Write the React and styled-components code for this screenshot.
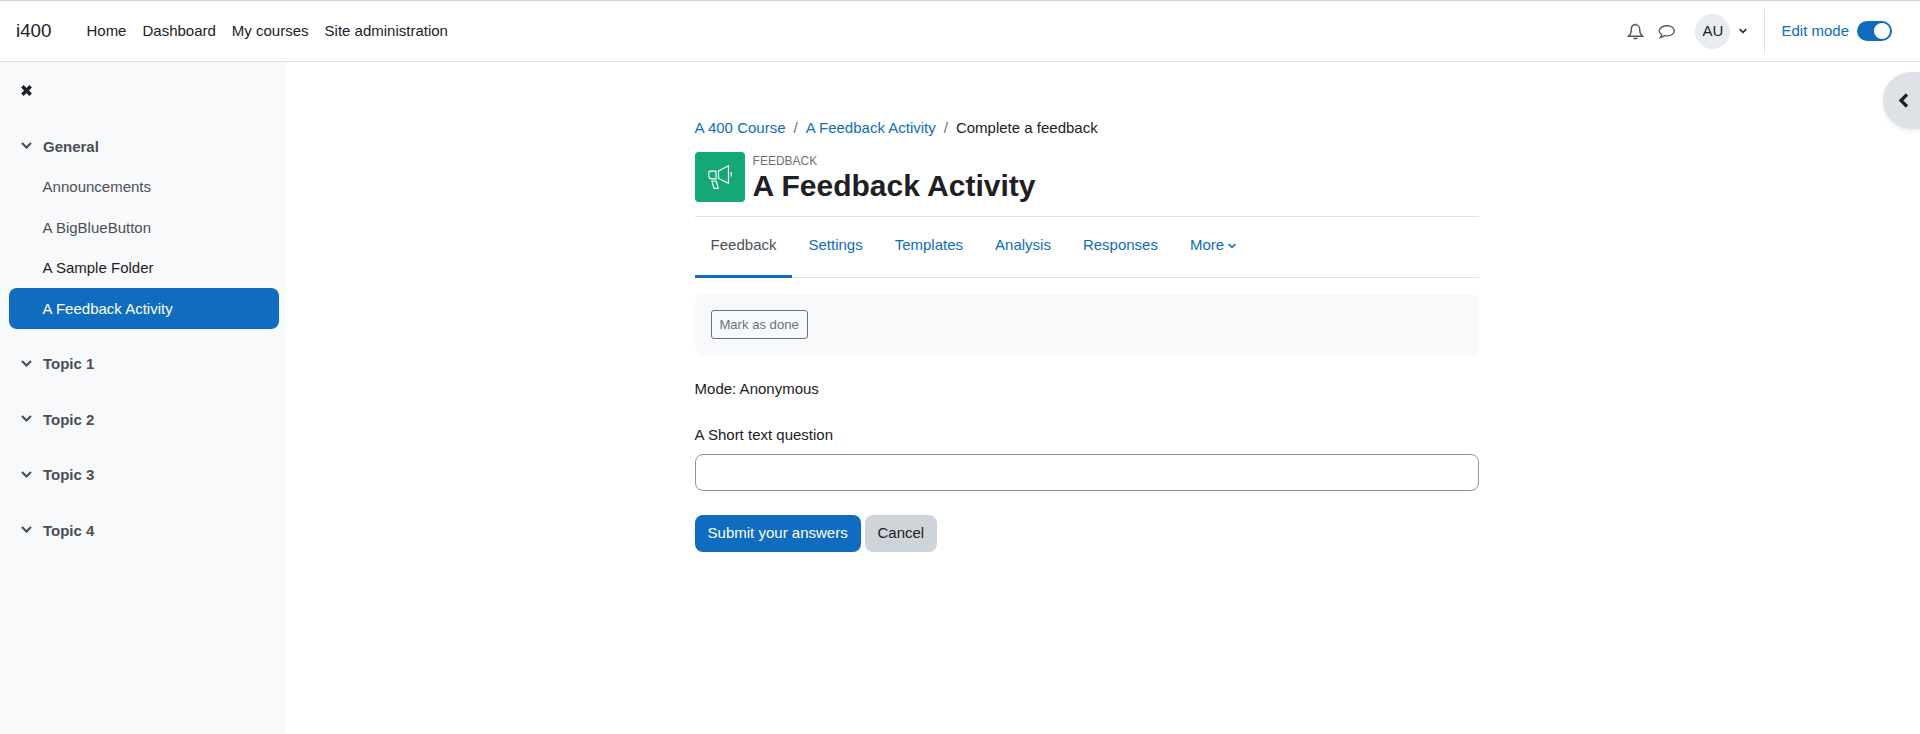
import React from "react";
import styled, { createGlobalStyle } from "styled-components";

const sections = [
  {
    title: "General",
    items: [
      { label: "Announcements" },
      { label: "A BigBlueButton" },
      { label: "A Sample Folder", dark: true },
      { label: "A Feedback Activity", active: true },
    ],
  },
  { title: "Topic 1", items: [] },
  { title: "Topic 2", items: [] },
  { title: "Topic 3", items: [] },
  { title: "Topic 4", items: [] },
];

const tabs = ["Feedback", "Settings", "Templates", "Analysis", "Responses"];

function Chevron({ className }) {
  return (
    <svg className={className} viewBox="0 0 11 7" fill="none" stroke="currentColor" strokeWidth="2.200">
      <polyline points="1,1 5.500,5.500 10,1" />
    </svg>
  );
}

export default function App() {
  return (
    <Page>
      <GlobalStyle />
      <Navbar>
        <Brand>i400</Brand>
        <PrimaryNav>
          <NavLink>Home</NavLink>
          <NavLink>Dashboard</NavLink>
          <NavLink>My courses</NavLink>
          <NavLink>Site administration</NavLink>
        </PrimaryNav>
        <UserArea>
          <NavIcon width="17" height="17" viewBox="0 0 17 17">
            <path d="M8.500 1.800c-2.800 0-4.200 2-4.200 4.600 0 3.400-.9 5.200-2.800 6.800h14c-1.900-1.600-2.800-3.400-2.800-6.800 0-2.600-1.400-4.600-4.200-4.600z" />
            <path d="M8.500 .6v1.200" />
            <path d="M6.600 14.800c.4 1.200 3.400 1.200 3.800 0" />
          </NavIcon>
          <MessageIcon width="18" height="17" viewBox="0 0 18 17">
            <path d="M9.500 2.800C5.300 2.800 1.200 4.700 1.200 7.900c0 1.600 1 2.800 2.500 3.600-.2 1.200-.6 2.200-1.400 3 1.700-.1 3.100-.9 4.100-1.900.9.200 1.700.3 2.600.3 4 0 7.300-2 7.300-5S13.500 2.800 9.500 2.800z" />
          </MessageIcon>
          <Avatar>AU</Avatar>
          <Caret />
          <Separator />
          <EditLabel>Edit mode</EditLabel>
          <Switch>
            <Knob />
          </Switch>
        </UserArea>
      </Navbar>
      <Body>
        <Sidebar>
          <CloseIcon viewBox="0 0 11 11">
            <path d="M2 2l7 7M9 2l-7 7" />
          </CloseIcon>
          <CourseIndex>
            {sections.map((section) => (
              <Section key={section.title}>
                <SectionTitle>
                  <SectionChevron />
                  {section.title}
                </SectionTitle>
                {section.items.map((item) => (
                  <SectionItem key={item.label} $active={item.active} $dark={item.dark}>
                    {item.label}
                  </SectionItem>
                ))}
              </Section>
            ))}
          </CourseIndex>
        </Sidebar>
        <Main>
          <Breadcrumb>
            <Crumb>A 400 Course</Crumb>
            <CrumbDivider>/</CrumbDivider>
            <Crumb>A Feedback Activity</Crumb>
            <CrumbDivider>/</CrumbDivider>
            <CurrentCrumb>Complete a feedback</CurrentCrumb>
          </Breadcrumb>
          <Header>
            <ActivityIcon>
              <svg width="24" height="24" viewBox="0 0 24 24" fill="none" stroke="#fff" strokeWidth="1.200">
                <path d="M10.500 6 L20.500 .8 V18.400 L10.500 13.500 Z" />
                <path d="M8 6.200H2.200C1.200 6.200 .8 6.800 .8 7.800v2.400C.8 12.200 2 13.800 4 13.800h4z" />
                <path d="M4 16h4.200l2 7.400H6z" />
                <path d="M23.200 7v4.500" />
              </svg>
            </ActivityIcon>
            <HeaderText>
              <ActivityType>FEEDBACK</ActivityType>
              <Title>A Feedback Activity</Title>
            </HeaderText>
          </Header>
          <Tabs>
            {tabs.map((tab, i) => (
              <Tab key={tab} $active={i === 0}>
                {tab}
              </Tab>
            ))}
            <Tab>
              More
              <MoreCaret />
            </Tab>
          </Tabs>
          <CompletionBar>
            <MarkDone>Mark as done</MarkDone>
          </CompletionBar>
          <Mode>Mode: Anonymous</Mode>
          <Question htmlFor="short-text">A Short text question</Question>
          <TextInput id="short-text" type="text" />
          <Actions>
            <Submit>Submit your answers</Submit>
            <Cancel>Cancel</Cancel>
          </Actions>
        </Main>
      </Body>
      <DrawerToggle>
        <svg width="11" height="15" viewBox="0 0 11 15" fill="none" stroke="currentColor" strokeWidth="3.300">
          <polyline points="9,1.500 3,7.500 9,13.500" />
        </svg>
      </DrawerToggle>
    </Page>
  );
}

const GlobalStyle = createGlobalStyle`
  html, body {
    margin: 0;
    padding: 0;
    background: #fff;
  }
  body {
    font-family: "Liberation Sans", Arial, sans-serif;
    font-size: 15px;
    color: #1d2125;
  }
  * {
    box-sizing: border-box;
  }
`;

const Page = styled.div`
  position: relative;
  height: 734px;
  overflow: hidden;
  display: flex;
  flex-direction: column;
`;

const Navbar = styled.nav`
  height: 62px;
  flex: none;
  display: flex;
  align-items: center;
  padding: 0 28px 0 16px;
  border-top: 1px solid #d0d0d0;
  border-bottom: 1px solid #dee2e6;
  background: #fff;
`;

const Brand = styled.a`
  font-size: 18.750px;
  margin-right: 35px;
`;

const PrimaryNav = styled.div`
  display: flex;
  gap: 16px;
  padding-bottom: 2px;
`;

const NavLink = styled.a`
  font-size: 15px;
  color: #1d2125;
`;

const UserArea = styled.div`
  margin-left: auto;
  display: flex;
  align-items: center;
  height: 100%;
`;

const NavIcon = styled.svg`
  fill: none;
  stroke: #55595e;
  stroke-width: 1.400;
  margin-right: 14px;
`;

const MessageIcon = styled(NavIcon)`
  margin-right: 19px;
`;

const Avatar = styled.div`
  width: 35px;
  height: 35px;
  border-radius: 50%;
  background: #e9ecef;
  display: flex;
  align-items: center;
  justify-content: center;
  font-size: 15px;
  padding-bottom: 2px;
`;

const Caret = styled(Chevron)`
  width: 8px;
  height: 6px;
  margin-left: 9px;
  margin-right: 17px;
  color: #1d2125;
`;

const Separator = styled.div`
  width: 1px;
  height: 44px;
  background: #dee2e6;
  margin-right: 16px;
`;

const EditLabel = styled.span`
  color: #0f6cbf;
  font-size: 15px;
  margin-right: 8px;
  padding-bottom: 2px;
`;

const Switch = styled.div`
  width: 35px;
  height: 20px;
  border-radius: 10px;
  background: #0f6cbf;
  position: relative;
`;

const Knob = styled.div`
  position: absolute;
  top: 2px;
  right: 2px;
  width: 16px;
  height: 16px;
  border-radius: 50%;
  background: #fff;
`;

const Body = styled.div`
  flex: 1;
  display: flex;
  min-height: 0;
`;

const Sidebar = styled.aside`
  width: 285px;
  flex: none;
  background: #f8f9fa;
  padding: 0 6px 0 9px;
`;

const CloseIcon = styled.svg`
  display: block;
  width: 13px;
  height: 13px;
  margin: 22px 0 0 11px;
  fill: none;
  stroke: #1d2125;
  stroke-width: 3;
`;

const CourseIndex = styled.div`
  margin-top: 29px;
`;

const Section = styled.div`
  margin-bottom: 15.500px;
`;

const SectionTitle = styled.div`
  display: flex;
  align-items: center;
  height: 40px;
  padding-left: 12px;
  font-weight: 700;
  font-size: 15px;
  color: #495057;
`;

const SectionChevron = styled(Chevron)`
  width: 11px;
  height: 7px;
  margin-right: 11px;
  margin-top: -1px;
  color: #495057;
`;

const SectionItem = styled.div`
  height: 41px;
  margin-bottom: -0.500px;
  display: flex;
  align-items: center;
  padding-left: 33.600px;
  border-radius: 8px;
  font-size: 15px;
  color: ${(p) => (p.$active ? "#fff" : p.$dark ? "#1d2125" : "#495057")};
  background: ${(p) => (p.$active ? "#0f6cbf" : "transparent")};

  &:first-of-type {
    margin-top: 1.500px;
  }
`;

const Main = styled.main`
  width: 784.400px;
  margin-left: 409.600px;
  padding-top: 54px;
`;

const Breadcrumb = styled.div`
  display: flex;
  align-items: center;
  height: 23px;
  font-size: 15px;
`;

const Crumb = styled.a`
  color: #0f6cbf;
`;

const CurrentCrumb = styled.span`
  color: #1d2125;
`;

const CrumbDivider = styled.span`
  color: #6a737b;
  padding: 0 8px;
`;

const Header = styled.div`
  display: flex;
  margin-top: 13px;
  padding-bottom: 12px;
  border-bottom: 1px solid #dee2e6;
`;

const ActivityIcon = styled.div`
  width: 50px;
  height: 50px;
  border-radius: 4px;
  background: #14a876;
  display: flex;
  align-items: center;
  justify-content: center;
  margin-right: 8px;
`;

const HeaderText = styled.div`
  display: flex;
  flex-direction: column;
`;

const ActivityType = styled.div`
  font-size: 12px;
  line-height: 14px;
  margin-top: 2px;
  color: #6a737b;
`;

const Title = styled.h1`
  margin: 0;
  font-size: 30px;
  line-height: 36px;
  font-weight: 700;
  color: #1d2125;
`;

const Tabs = styled.div`
  display: flex;
  height: 61px;
  border-bottom: 1px solid #dee2e6;
`;

const Tab = styled.a`
  display: flex;
  align-items: center;
  padding: 0 16px 3px;
  font-size: 15px;
  color: ${(p) => (p.$active ? "#495057" : "#0f6cbf")};
  border-bottom: 3px solid ${(p) => (p.$active ? "#0f6cbf" : "transparent")};
  margin-bottom: -1px;
`;

const MoreCaret = styled(Chevron)`
  width: 8px;
  height: 6px;
  margin-left: 4px;
  margin-top: 3px;
`;

const CompletionBar = styled.div`
  margin-top: 16px;
  height: 61px;
  padding: 16px;
  background: #f8f9fa;
  border-radius: 8px;
`;

const MarkDone = styled.button`
  display: block;
  width: 97px;
  height: 29px;
  padding: 0;
  font-family: inherit;
  font-size: 13.100px;
  color: #6a737b;
  background: transparent;
  border: 1px solid #6a737b;
  border-radius: 3px;
`;

const Mode = styled.div`
  margin-top: 23px;
  line-height: 22px;
  font-size: 15px;
`;

const Question = styled.label`
  display: block;
  margin-top: 24px;
  line-height: 22px;
  font-size: 15px;
`;

const TextInput = styled.input`
  display: block;
  width: 100%;
  height: 37px;
  margin-top: 8px;
  border: 1px solid #8f959e;
  border-radius: 8px;
  background: #fff;
  outline: none;
`;

const Actions = styled.div`
  display: flex;
  gap: 4px;
  margin-top: 24px;
`;

const Button = styled.button`
  height: 37px;
  padding: 0 12px 2px;
  font-family: inherit;
  font-size: 15px;
  border: 1px solid transparent;
  border-radius: 8px;
`;

const Submit = styled(Button)`
  background: #0f6cbf;
  color: #fff;
`;

const Cancel = styled(Button)`
  background: #ced4da;
  color: #1d2125;
  padding: 0 11.800px 2px;
`;

const DrawerToggle = styled.div`
  position: absolute;
  top: 72px;
  right: 0;
  width: 37px;
  height: 57px;
  border-radius: 28px 0 0 28px;
  background: #dee2e6;
  box-shadow: 0 2px 4px rgba(0, 0, 0, 0.08);
  display: flex;
  align-items: center;
  justify-content: center;
  color: #1d2125;
  padding-left: 4px;
`;
